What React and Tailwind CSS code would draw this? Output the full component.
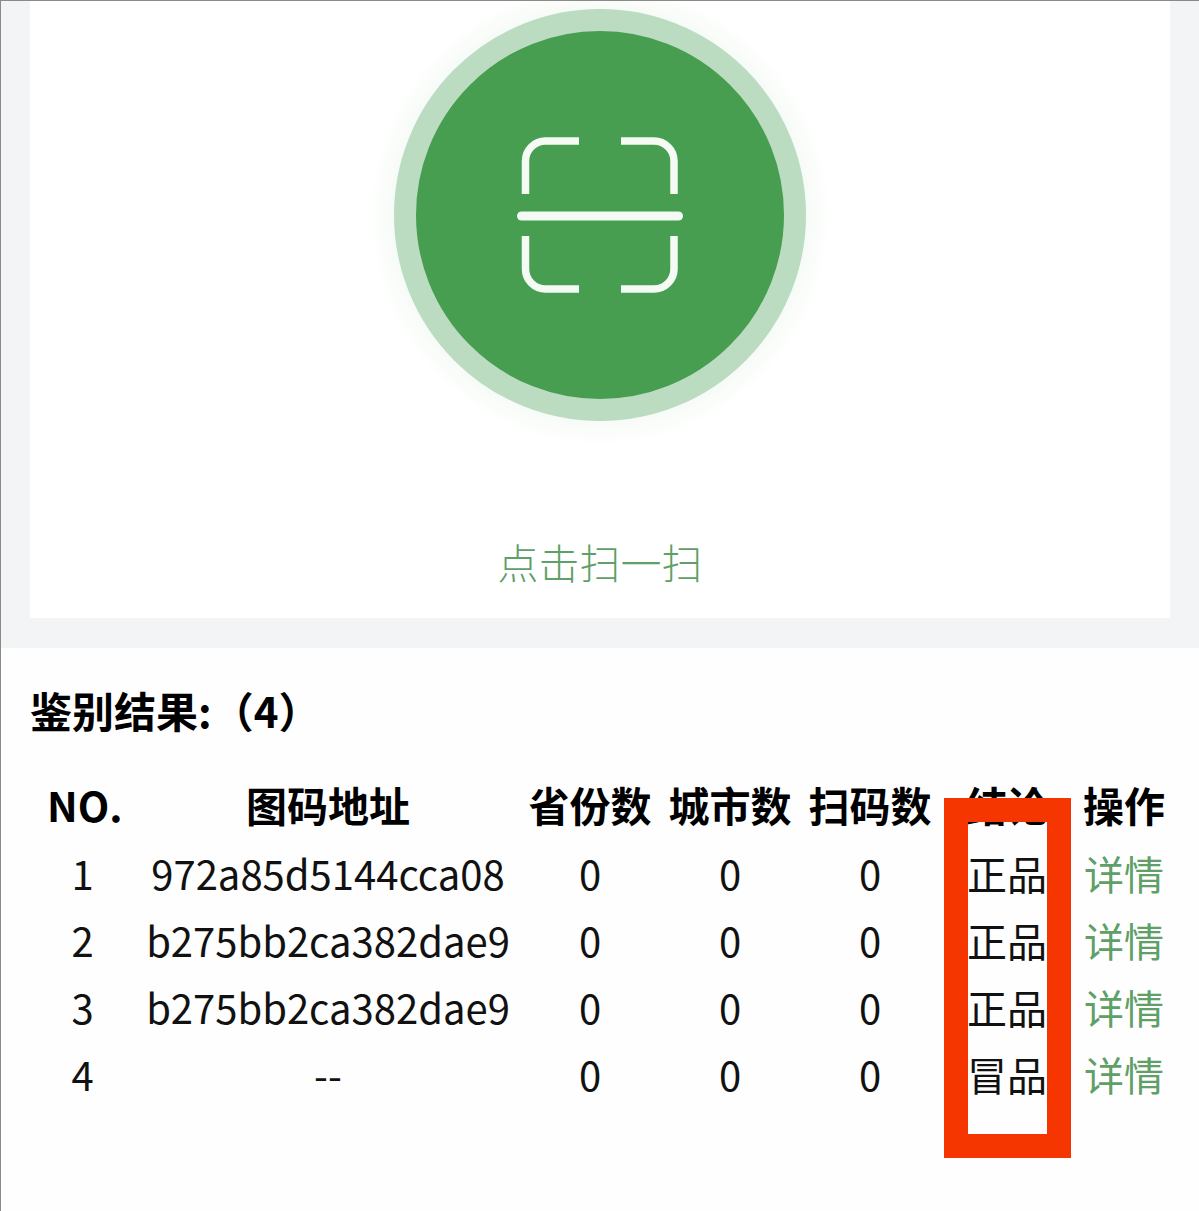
import React from 'react';

const font = { fontFamily: '"Noto Sans CJK SC", "Noto Sans", sans-serif' };

const rows = [
  { no: 1, code: '972a85d5144cca08', result: '正品' },
  { no: 2, code: 'b275bb2ca382dae9', result: '正品' },
  { no: 3, code: 'b275bb2ca382dae9', result: '正品' },
  { no: 4, code: '--', result: '冒品' },
];

const ScanIcon = () => (
  <svg width="170" height="170" viewBox="0 0 170 170" fill="none" stroke="#f4fbf4">
    <path strokeWidth="7.5" d="M10.5 64V31a20 20 0 0 1 20-20H64" />
    <path strokeWidth="7.5" d="M106 11h33a20 20 0 0 1 20 20v33" />
    <path strokeWidth="7.5" d="M10.5 106v33a20 20 0 0 0 20 20H64" />
    <path strokeWidth="7.5" d="M106 159h33a20 20 0 0 0 20-20v-33" />
    <path strokeWidth="9" strokeLinecap="round" d="M6.5 86h157" />
  </svg>
);

const gridCols = 'grid grid-cols-[81px_400px_124px_156px_124px_150px_84px] pl-[47px] items-center text-center';

export default function App() {
  return (
    <div
      className="relative h-[1211px] w-[1199px] overflow-hidden border-l border-t border-[#8a8a8a] bg-[#fefefe] text-[#111]"
      style={font}
    >
      <div className="bg-[#f3f4f6] px-[29px] pb-[30px] -ml-px pl-[30px]">
        <div className="flex h-[617px] flex-col items-center bg-white pt-[8px]">
          <div className="flex h-[412px] w-[412px] items-center justify-center rounded-full border-[22px] border-[#bbdcc0] bg-[#479d50] shadow-[0_0_24px_12px_#f6fbf6]">
            <ScanIcon />
          </div>
          <div className="mt-[110px] text-[41px] leading-[60px] font-light text-[#5f9f68]">点击扫一扫</div>
        </div>
      </div>

      <div className="pt-[32px]">
        <div className="pl-[29px] text-[42px] leading-[60px] font-bold text-black">鉴别结果:（4）</div>
        <div className="mt-[31px] -ml-px">
          <div className={`${gridCols} h-[68px] text-[41px] font-bold text-black`}>
            <span className="pr-[10px]">NO.</span>
            <span>图码地址</span>
            <span>省份数</span>
            <span>城市数</span>
            <span>扫码数</span>
            <span>结论</span>
            <span>操作</span>
          </div>
          {rows.map((row) => (
            <div key={row.no} className={`${gridCols} h-[67px] text-[40px] font-normal`}>
              <span className="pr-[10px]">{row.no}</span>
              <span>{row.code}</span>
              <span>0</span>
              <span>0</span>
              <span>0</span>
              <span>{row.result}</span>
              <span className="text-[#5f9f68]">详情</span>
            </div>
          ))}
        </div>
      </div>

      {/* red annotation drawn over the screenshot */}
      <div className="absolute left-[943px] top-[797px] h-[360px] w-[127px] border-[24px] border-[#f53600]" />
    </div>
  );
}
